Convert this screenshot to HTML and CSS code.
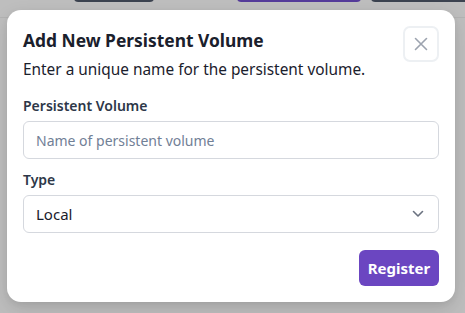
FILE: index.html
```html
<!DOCTYPE html>
<html lang="en">
<head>
<meta charset="utf-8">
<title>Add New Persistent Volume</title>
<link rel="stylesheet" href="styles.css">
</head>
<body>
<div class="backdrop">
  <div class="behind">
    <span class="bg-btn dark one"></span>
    <span class="bg-btn purple"></span>
    <span class="bg-btn dark two"></span>
  </div>
  <div class="modal">
    <div class="modal-head">
      <div class="head-text">
        <h2 class="title">Add New Persistent Volume</h2>
        <p class="subtitle">Enter a unique name for the persistent volume.</p>
      </div>
      <button class="close" aria-label="Close">
        <svg width="14" height="14" viewBox="0 0 14 14"><path d="M1.5 1.5 L12.5 12.5 M12.5 1.5 L1.5 12.5" stroke="#9ca3af" stroke-width="1.6" stroke-linecap="round" fill="none"/></svg>
      </button>
    </div>
    <div class="field">
      <label class="label">Persistent Volume</label>
      <div class="input placeholder">Name of persistent volume</div>
    </div>
    <div class="field">
      <label class="label">Type</label>
      <div class="input select">
        <span>Local</span>
        <svg width="12" height="8" viewBox="0 0 12 8"><path d="M1.5 1.5 L6 6 L10.5 1.5" stroke="#6b7280" stroke-width="1.6" stroke-linecap="round" stroke-linejoin="round" fill="none"/></svg>
      </div>
    </div>
    <div class="actions">
      <button class="register">Register</button>
    </div>
  </div>
</div>
</body>
</html>
```
FILE: styles.css
```css
* { box-sizing: border-box; }
html, body { margin: 0; padding: 0; }
body {
  width: 465px;
  height: 313px;
  overflow: hidden;
  background: #bebebe;
  font-family: "Noto Sans", "Open Sans", sans-serif;
}
.backdrop {
  position: relative;
  width: 465px;
  height: 313px;
  padding: 10px 10px 0 7px;
}
.behind {
  position: absolute;
  left: 0; top: 0; right: 0;
  height: 18px;
  border-bottom: 1px solid #b3b3b3;
}
.bg-btn {
  position: absolute;
  top: -6px;
  height: 8px;
  border-radius: 4px;
  background: #3c4350;
}
.bg-btn.one { left: 74px; width: 80px; }
.bg-btn.purple { left: 237px; width: 124px; background: #553c9a; }
.bg-btn.two { left: 371px; width: 110px; }
.modal {
  position: relative;
  width: 448px;
  height: 292px;
  background: #fff;
  border-radius: 14px;
  padding: 16px 16px 16px 16px;
  box-shadow: 0 8px 20px rgba(0,0,0,0.12), 0 2px 6px rgba(0,0,0,0.06);
  display: flex;
  flex-direction: column;
}
.modal-head {
  display: flex;
  justify-content: space-between;
  align-items: flex-start;
}
.title {
  margin: 1px 0 0;
  font-size: 17.4px;
  line-height: 26px;
  font-weight: 700;
  color: #1a202c;
}
.subtitle {
  margin: 5px 0 0;
  font-size: 15.4px;
  line-height: 24px;
  color: #1a202c;
}
.close {
  width: 36px;
  height: 36px;
  margin-top: 0;
  border: 2px solid #edf0f3;
  border-radius: 7px;
  background: #fff;
  display: flex;
  align-items: center;
  justify-content: center;
  padding: 0;
}
.field {
  display: flex;
  flex-direction: column;
  margin-top: 14px;
}
.field + .field { margin-top: 11px; }
.label {
  font-size: 14px;
  line-height: 20px;
  font-weight: 600;
  color: #2d3748;
  margin-bottom: 5px;
}
.input {
  height: 38px;
  border: 1px solid #d5d8de;
  border-radius: 6px;
  display: flex;
  align-items: center;
  padding: 0 12px;
  font-size: 15px;
}
.placeholder { color: #718096; font-size: 14px; }
.select {
  justify-content: space-between;
  color: #1a202c;
  padding: 0 14px 0 12px;
}
.actions {
  display: flex;
  justify-content: flex-end;
  margin-top: 17px;
}
.register {
  width: 80px;
  height: 36px;
  border: none;
  border-radius: 6px;
  background: #6b46c1;
  color: #fff;
  font-family: inherit;
  font-size: 15px;
  font-weight: 700;
}
```
